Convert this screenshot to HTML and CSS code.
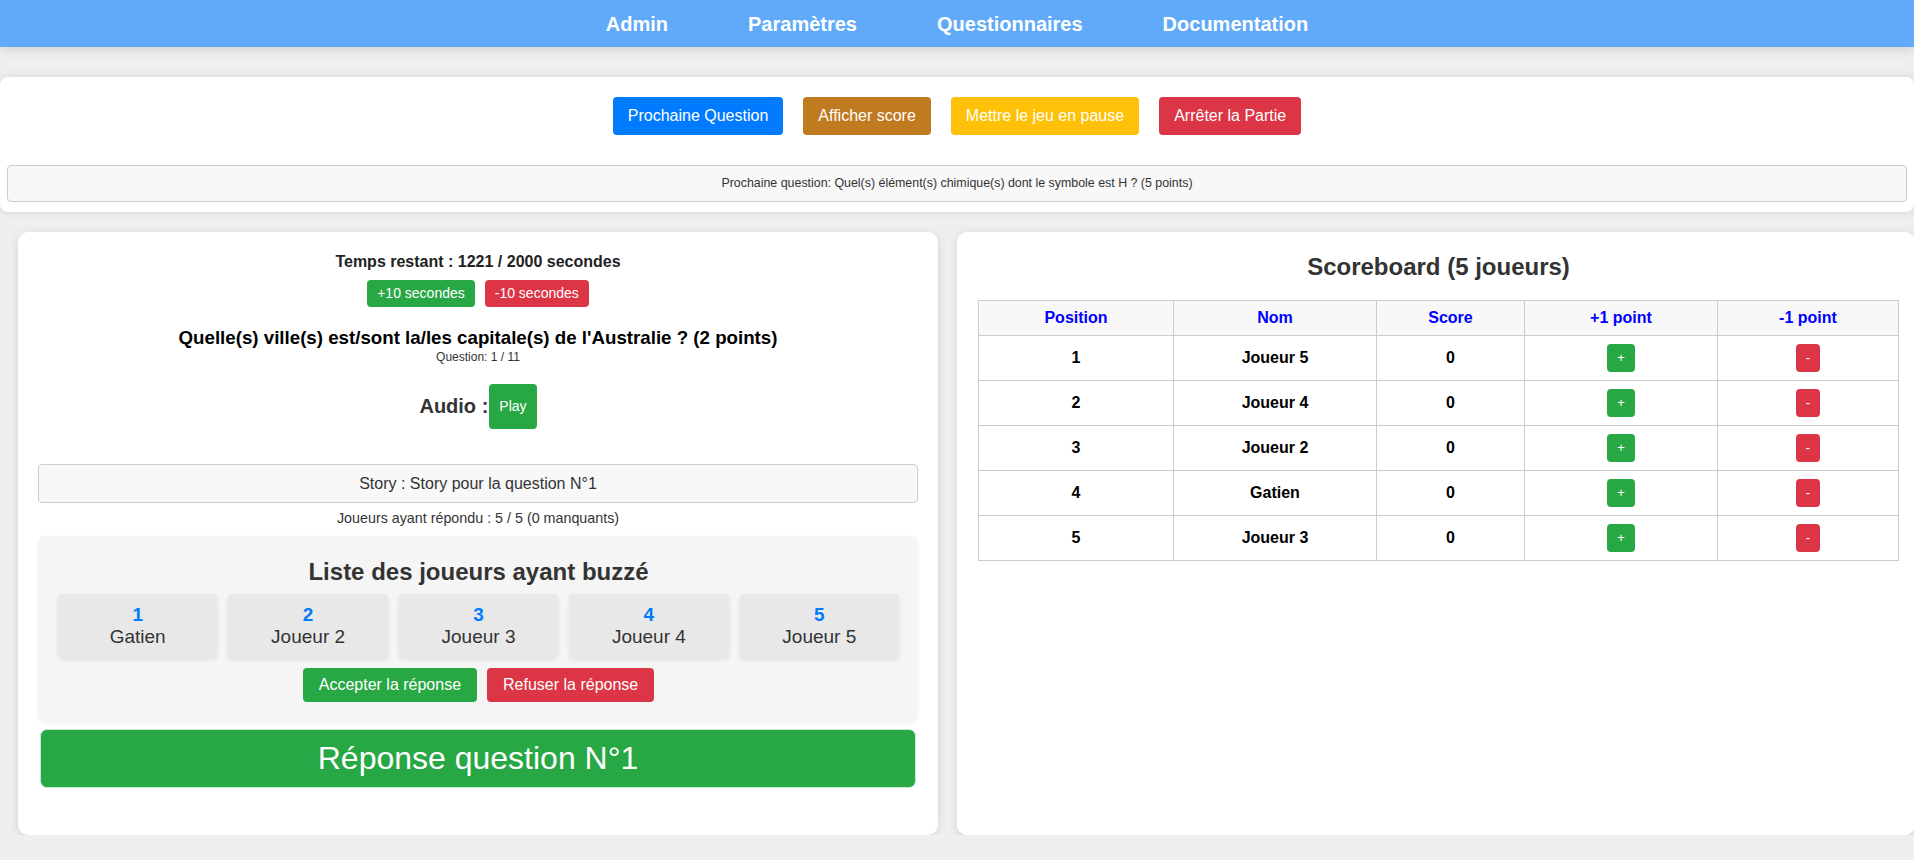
FILE: index.html
```html
<!DOCTYPE html>
<html lang="fr">
<head>
<meta charset="utf-8">
<title>Partie en cours</title>
<link rel="stylesheet" href="styles.css">
</head>
<body>
<nav class="topnav">
  <a class="nav-link" href="#">Admin</a>
  <a class="nav-link" href="#">Paramètres</a>
  <a class="nav-link" href="#">Questionnaires</a>
  <a class="nav-link" href="#">Documentation</a>
</nav>

<section class="control-card">
  <div class="controls">
    <button class="btn btn-blue">Prochaine Question</button>
    <button class="btn btn-brown">Afficher score</button>
    <button class="btn btn-yellow">Mettre le jeu en pause</button>
    <button class="btn btn-red">Arrêter la Partie</button>
  </div>
  <div class="next-question">Prochaine question: Quel(s) élément(s) chimique(s) dont le symbole est H ? (5 points)</div>
</section>

<main class="panels">
  <section class="panel panel-left">
    <div class="timer">Temps restant : 1221 / 2000 secondes</div>
    <div class="time-buttons">
      <button class="btn-sm btn-green">+10 secondes</button>
      <button class="btn-sm btn-red">-10 secondes</button>
    </div>
    <h3 class="question-title">Quelle(s) ville(s) est/sont la/les capitale(s) de l'Australie ? (2 points)</h3>
    <div class="question-num">Question: 1 / 11</div>
    <div class="audio-row">
      <span class="audio-label">Audio :</span>
      <button class="btn-play">Play</button>
    </div>
    <div class="story">Story : Story pour la question N°1</div>
    <div class="answered">Joueurs ayant répondu : 5 / 5 (0 manquants)</div>
    <div class="buzz-box">
      <h3 class="buzz-title">Liste des joueurs ayant buzzé</h3>
      <div class="buzz-list">
        <div class="buzz-card"><div class="buzz-rank">1</div><div class="buzz-name">Gatien</div></div>
        <div class="buzz-card"><div class="buzz-rank">2</div><div class="buzz-name">Joueur 2</div></div>
        <div class="buzz-card"><div class="buzz-rank">3</div><div class="buzz-name">Joueur 3</div></div>
        <div class="buzz-card"><div class="buzz-rank">4</div><div class="buzz-name">Joueur 4</div></div>
        <div class="buzz-card"><div class="buzz-rank">5</div><div class="buzz-name">Joueur 5</div></div>
      </div>
      <div class="buzz-actions">
        <button class="btn-md btn-green">Accepter la réponse</button>
        <button class="btn-md btn-red">Refuser la réponse</button>
      </div>
    </div>
    <div class="answer-banner">Réponse question N°1</div>
  </section>

  <section class="panel panel-right">
    <h2 class="score-title">Scoreboard (5 joueurs)</h2>
    <table class="score-table">
      <colgroup>
        <col class="c-pos"><col class="c-nom"><col class="c-score"><col class="c-plus"><col class="c-minus">
      </colgroup>
      <thead>
        <tr><th>Position</th><th>Nom</th><th>Score</th><th>+1 point</th><th>-1 point</th></tr>
      </thead>
      <tbody>
        <tr><td>1</td><td>Joueur 5</td><td>0</td><td><button class="btn-pt btn-green">+</button></td><td><button class="btn-pt btn-red">-</button></td></tr>
        <tr><td>2</td><td>Joueur 4</td><td>0</td><td><button class="btn-pt btn-green">+</button></td><td><button class="btn-pt btn-red">-</button></td></tr>
        <tr><td>3</td><td>Joueur 2</td><td>0</td><td><button class="btn-pt btn-green">+</button></td><td><button class="btn-pt btn-red">-</button></td></tr>
        <tr><td>4</td><td>Gatien</td><td>0</td><td><button class="btn-pt btn-green">+</button></td><td><button class="btn-pt btn-red">-</button></td></tr>
        <tr><td>5</td><td>Joueur 3</td><td>0</td><td><button class="btn-pt btn-green">+</button></td><td><button class="btn-pt btn-red">-</button></td></tr>
      </tbody>
    </table>
  </section>
</main>
</body>
</html>
```

FILE: styles.css
```css
* { box-sizing: border-box; }

html { background: #efefef; }

body {
  margin: 0;
  font-family: "Liberation Sans", Arial, sans-serif;
  color: #333;
  background: #efefef;
}

button { font-family: "Liberation Sans", Arial, sans-serif; cursor: pointer; }

/* NAV */
.topnav {
  height: 47px;
  background: #60aaf9;
  display: flex;
  justify-content: center;
  align-items: center;
  gap: 80px;
  box-shadow: 0 3px 10px rgba(0, 0, 0, 0.12);
  position: relative;
  z-index: 1;
}
.nav-link {
  color: #fff;
  font-weight: bold;
  font-size: 20px;
  text-decoration: none;
  line-height: 24px;
}

/* CONTROL CARD */
.control-card {
  margin-top: 30px;
  background: #fff;
  border-radius: 8px;
  padding: 20px 7px 10px 7px;
  box-shadow: 0 0 10px rgba(0, 0, 0, 0.12);
}
.controls {
  display: flex;
  justify-content: center;
  gap: 20px;
}
.btn {
  border: none;
  border-radius: 4px;
  color: #fff;
  font-size: 16px;
  line-height: 18px;
  padding: 10px 15px;
}
.btn-blue { background: #007bff; }
.btn-brown { background: #c07a1f; }
.btn-yellow { background: #ffc107; }
.btn-red { background: #dc3545; }
.btn-green { background: #28a745; }

.next-question {
  margin-top: 30px;
  background: #f8f8f8;
  border: 1px solid #ccc;
  border-radius: 4px;
  text-align: center;
  font-size: 12.4px;
  line-height: 15px;
  padding: 10px;
  color: #333;
}

/* PANELS */
.panels {
  margin-top: 20px;
  display: grid;
  grid-template-columns: 920px 1fr;
  gap: 19px;
  padding: 0 1px 0 18px;
}
.panel {
  background: #fff;
  border-radius: 10px;
  box-shadow: 0 2px 10px rgba(0, 0, 0, 0.12);
}
.panel-left {
  padding: 20px 20px 47px 20px;
  text-align: center;
}
.panel-right {
  padding: 21px 16px 20px 21px;
}

.timer {
  font-size: 16px;
  font-weight: bold;
  line-height: 20px;
  color: #222;
}
.time-buttons {
  margin-top: 8px;
  display: flex;
  justify-content: center;
  gap: 10px;
}
.btn-sm {
  border: none;
  border-radius: 4px;
  color: #fff;
  font-size: 14px;
  line-height: 17px;
  padding: 5px 10px;
}
.question-title {
  margin: 20px 0 0;
  font-size: 18.72px;
  line-height: 22px;
  color: #000;
}
.question-num {
  margin-top: 1px;
  font-size: 12px;
  line-height: 14px;
  color: #333;
}
.audio-row {
  margin-top: 20px;
  display: flex;
  justify-content: center;
  align-items: center;
  gap: 1px;
}
.audio-label {
  font-size: 20px;
  font-weight: bold;
  color: #333;
}
.btn-play {
  border: none;
  border-radius: 4px;
  background: #28a745;
  color: #fff;
  font-size: 14px;
  line-height: 17px;
  padding: 14px 10px;
}
.story {
  margin-top: 35px;
  background: #f8f8f8;
  border: 1px solid #ccc;
  border-radius: 4px;
  font-size: 16px;
  line-height: 19px;
  padding: 9px;
  color: #333;
}
.answered {
  margin-top: 7px;
  font-size: 14.3px;
  line-height: 16px;
  color: #333;
}

.buzz-box {
  margin-top: 10px;
  background: #f5f5f5;
  border-radius: 8px;
  padding: 22px 19px 20px 20px;
  box-shadow: 0 1px 4px rgba(0, 0, 0, 0.06);
}
.buzz-title {
  margin: 0;
  font-size: 24px;
  line-height: 28px;
  color: #333;
}
.buzz-list {
  margin-top: 8px;
  display: grid;
  grid-template-columns: repeat(5, 1fr);
  gap: 11px;
}
.buzz-card {
  background: #e8e8e8;
  border-radius: 4px;
  padding: 10px 0;
  box-shadow: 0 2px 4px rgba(0, 0, 0, 0.08);
}
.buzz-rank {
  font-size: 19px;
  line-height: 22px;
  font-weight: bold;
  color: #007bff;
}
.buzz-name {
  font-size: 19px;
  line-height: 22px;
  color: #333;
}
.buzz-actions {
  margin-top: 10px;
  display: flex;
  justify-content: center;
  gap: 10px;
}
.btn-md {
  border: none;
  border-radius: 4px;
  color: #fff;
  font-size: 16px;
  line-height: 18px;
  padding: 8px 16px;
}
.answer-banner {
  margin: 7px 2px 0;
  background: #28a745;
  color: #fff;
  border: 1px solid #c9e9d2;
  border-radius: 7px;
  font-size: 32px;
  line-height: 35px;
  padding: 11px;
}

/* SCOREBOARD */
.score-title {
  margin: 0;
  text-align: center;
  font-size: 24px;
  line-height: 28px;
  color: #333;
}
.score-table {
  margin-top: 19px;
  width: 920px;
  border-collapse: collapse;
  table-layout: fixed;
}
.c-pos { width: 195px; }
.c-nom { width: 203px; }
.c-score { width: 148px; }
.c-plus { width: 193px; }
.c-minus { width: 181px; }
.score-table th,
.score-table td {
  border: 1px solid #ccc;
  text-align: center;
  font-size: 16px;
  font-weight: bold;
  padding: 0;
}
.score-table th {
  background: #f8f8f8;
  color: #0000ff;
  height: 35px;
}
.score-table td {
  color: #000;
  height: 45px;
}
.btn-pt {
  border: none;
  border-radius: 4px;
  color: #fff;
  font-size: 13px;
  line-height: 18px;
  padding: 5px 0;
  vertical-align: middle;
}
.btn-pt.btn-green { width: 28px; }
.btn-pt.btn-red { width: 24px; }
```
